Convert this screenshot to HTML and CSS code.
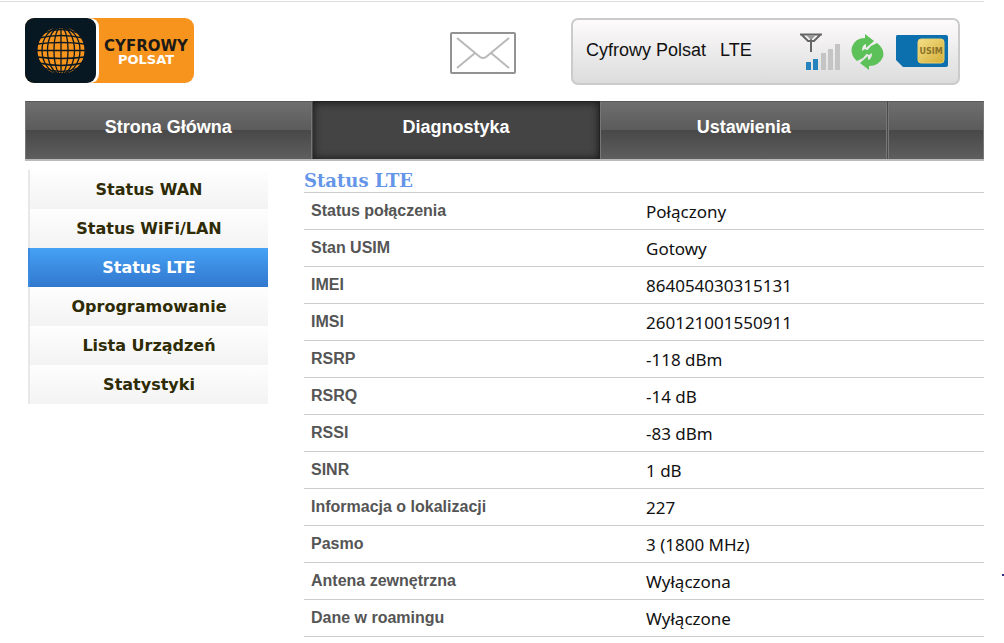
FILE: index.html
```html
<!DOCTYPE html>
<html lang="pl">
<head>
<meta charset="utf-8">
<title>Status LTE</title>
<meta name="viewport" content="width=device-width, initial-scale=1">
<link rel="stylesheet" href="styles.css">
</head>
<body>
<div class="page">
  <header class="header">
    <a class="logo" href="#" aria-label="Cyfrowy Polsat">
      <svg width="170" height="66" viewBox="0 0 170 66">
        <rect width="169" height="65" rx="9" fill="#f7941e"/>
        <path d="M9 0H64Q74 0 74 10V55Q74 65 64 65H9Z" fill="#fff"/>
        <rect width="71" height="65" rx="9" fill="#081822"/>
        <circle cx="36" cy="32.500" r="23.500" fill="#f7941e"/>
        <g fill="none" stroke="#081822" stroke-width="1.300">
          <path d="M36 8V57M12 32.500H60"/>
          <ellipse cx="36" cy="32.500" rx="7" ry="23.500"/>
          <ellipse cx="36" cy="32.500" rx="13.500" ry="23.500"/>
          <ellipse cx="36" cy="32.500" rx="19" ry="23.500"/>
          <path d="M12 26Q36 23 60 26M14 20Q36 15 58 20M19 15Q36 8 53 15M12 39Q36 42 60 39M14 45Q36 50 58 45M19 50Q36 57 53 50"/>
        </g>
        <text class="logo-text logo-top" x="121" y="33">CYFROWY</text>
        <text class="logo-text logo-bottom" x="121" y="46">POLSAT</text>
      </svg>
    </a>
    <button class="mail" type="button" aria-label="Wiadomości">
      <svg width="66" height="42" viewBox="0 0 66 42" fill="none">
        <rect x="1" y="1" width="64" height="40" rx="1" stroke="#929292" stroke-width="2"/>
        <path d="M7 6L30 25Q33 27 36 25L59 6M7 36L25 21M59 36L41 21" stroke="#b9b9b9" stroke-width="2"/>
      </svg>
    </button>
    <div class="status">
      <span class="status-text">Cyfrowy Polsat</span>
      <span class="status-text">LTE</span>
      <div class="status-icons">
        <svg width="40" height="38" viewBox="0 0 40 38">
          <path d="M0 1.500H22M2 2L8 8H14L20 2M11 1V19" fill="none" stroke="#666" stroke-width="2"/>
          <path d="M6 2H16L11 7Z" fill="#999"/>
          <path d="M6 29H11V37H6ZM13 26H18V37H13Z" fill="#2584bd"/>
          <path d="M21 20H26V37H21ZM28 16H33V37H28ZM35 11H40V37H35Z" fill="#c4c4c4"/>
        </svg>
        <svg width="33" height="38" viewBox="0 0 33 38" fill="#5cc158">
          <path d="M14 1L23 8L15 15V11Q11 12 11 18L14 16L18 18L12 25L6 28Q-1 22 1 14Q4 5 14 5Z"/>
          <path d="M18 37L9 30L17 23V27Q21 26 21 20L18 22L14 20L20 13L26 10Q34 16 32 24Q28 33 18 33Z"/>
        </svg>
        <svg width="54" height="33" viewBox="0 0 54 33">
          <defs><linearGradient id="gold" x2="1" y2="1"><stop stop-color="#f4df87"/><stop offset="1" stop-color="#d4ae38"/></linearGradient></defs>
          <path d="M2 0H51Q53 0 53 2V30Q53 32 51 32H8L1 25V2Q1 0 2 0Z" fill="#0b70ad"/>
          <rect x="23" y="4" width="26" height="24" rx="3" fill="url(#gold)" stroke="#e9cf6b"/>
          <text class="sim-text" x="36" y="19">USIM</text>
        </svg>
      </div>
    </div>
  </header>

  <nav class="tabs">
    <a class="tab" href="#">Strona Główna</a>
    <a class="tab tab-active" href="#" aria-current="page">Diagnostyka</a>
    <a class="tab" href="#">Ustawienia</a>
    <span class="tab tab-rest"></span>
  </nav>

  <div class="content">
    <nav class="side">
      <a class="side-link" href="#">Status WAN</a>
      <a class="side-link" href="#">Status WiFi/LAN</a>
      <a class="side-link side-active" href="#" aria-current="page">Status LTE</a>
      <a class="side-link" href="#">Oprogramowanie</a>
      <a class="side-link" href="#">Lista Urządzeń</a>
      <a class="side-link" href="#">Statystyki</a>
    </nav>
    <main class="main">
      <h1 class="title">Status LTE</h1>
      <table class="data">
        <tbody>
          <tr><th scope="row">Status połączenia</th><td>Połączony</td></tr>
          <tr><th scope="row">Stan USIM</th><td>Gotowy</td></tr>
          <tr><th scope="row">IMEI</th><td>864054030315131</td></tr>
          <tr><th scope="row">IMSI</th><td>260121001550911</td></tr>
          <tr><th scope="row">RSRP</th><td>-118 dBm</td></tr>
          <tr><th scope="row">RSRQ</th><td>-14 dB</td></tr>
          <tr><th scope="row">RSSI</th><td>-83 dBm</td></tr>
          <tr><th scope="row">SINR</th><td>1 dB</td></tr>
          <tr><th scope="row">Informacja o lokalizacji</th><td>227</td></tr>
          <tr><th scope="row">Pasmo</th><td>3 (1800 MHz)</td></tr>
          <tr><th scope="row">Antena zewnętrzna</th><td>Wyłączona</td></tr>
          <tr><th scope="row">Dane w roamingu</th><td>Wyłączone</td></tr>
        </tbody>
      </table>
    </main>
  </div>
</div>
<span class="edge-mark"></span>
</body>
</html>
```
FILE: styles.css
```css
* { box-sizing: border-box; }

body {
  margin: 0;
  background: #fff;
  font-family: "Liberation Sans", Arial, sans-serif;
}

a { text-decoration: none; }
svg { display: block; }

.page {
  margin-right: 20px;
  padding-top: 1px;
}

.header {
  display: flex;
  align-items: flex-start;
  padding: 16px 24px 16px 25px;
  border-top: 1px solid #ddd;
}

.logo { margin-right: auto; }

.logo-text {
  font-family: "DejaVu Sans", sans-serif;
  font-weight: bold;
  text-anchor: middle;
}
.logo-top { font-size: 15px; fill: #1c1a17; }
.logo-bottom { font-size: 13px; fill: #fff; }

.mail {
  margin: 14px 55px 0 0;
  padding: 0;
  border: 0;
  background: none;
}

.status {
  display: flex;
  align-items: center;
  gap: 14px;
  width: 389px;
  height: 67px;
  padding: 0 9px 0 13px;
  border: 2px solid #cbcbcb;
  border-radius: 7px;
  background: linear-gradient(#fdfbfc, #dcdcdc);
  color: #111;
  font-size: 18px;
  line-height: 24px;
}

.status-text { padding-bottom: 4px; }

.status-icons {
  display: flex;
  align-items: center;
  gap: 11px;
  margin-left: auto;
}

.sim-text {
  font-family: "DejaVu Sans", sans-serif;
  font-size: 8px;
  font-weight: bold;
  text-anchor: middle;
  fill: #88712a;
}

.tabs {
  display: flex;
  height: 60px;
  margin-left: 25px;
  border-bottom: 2px solid #bbb;
}

.tab {
  flex: 0 0 30%;
  padding-top: 13px;
  border-top: 1px solid #5a5a5a;
  border-right: 1px solid #4a4a4a;
  background: linear-gradient(#6e6e6e, #5b5b5b 50%, #484848 50%, #5e5e5e);
  box-shadow: inset 1px 0 #777, inset -1px 0 #777;
  color: #fff;
  font-size: 18px;
  font-weight: bold;
  line-height: 24px;
  text-align: center;
}

.tab-active {
  border-color: #222;
  background: #444;
  box-shadow: inset 0 0 8px #151515;
}

.tab-rest {
  flex: 1;
  border-right: 0;
}

.content {
  display: flex;
  align-items: flex-start;
  gap: 36px;
  padding: 9px 0 0 28px;
}

.side { flex: 0 0 240px; }

.side-link {
  display: block;
  border-left: 2px solid #e8e8e8;
  background: linear-gradient(#fefefe, #f3f3f3);
  color: #2e2b05;
  font-family: Verdana, "DejaVu Sans", sans-serif;
  font-size: 16px;
  font-weight: bold;
  line-height: 39px;
  text-align: center;
}

.side-active {
  border-color: #3a8be0;
  background: linear-gradient(#45a2f5, #3277ce);
  color: #fff;
}

.main { flex: 1; }

.title {
  margin: 0;
  color: #6495e8;
  font-family: Georgia, "DejaVu Serif", serif;
  font-size: 18px;
  line-height: 22px;
}

.data {
  width: 100%;
  border-collapse: separate;
  border-spacing: 0;
  border-top: 1px solid #ccc;
  table-layout: fixed;
}

.data th,
.data td {
  height: 37px;
  padding: 0 7px;
  border-bottom: 1px solid #ccc;
  text-align: left;
  vertical-align: top;
}

.data th {
  width: 335px;
  color: #555;
  font-size: 16px;
  line-height: 36px;
}

.data td {
  padding-top: 2px;
  color: #111;
  font-family: "Noto Sans", Tahoma, sans-serif;
  font-size: 17px;
  line-height: 34px;
}

.edge-mark {
  position: absolute;
  top: 574px;
  right: 0;
  width: 2px;
  height: 2px;
  background: #2a2a80;
}
```
